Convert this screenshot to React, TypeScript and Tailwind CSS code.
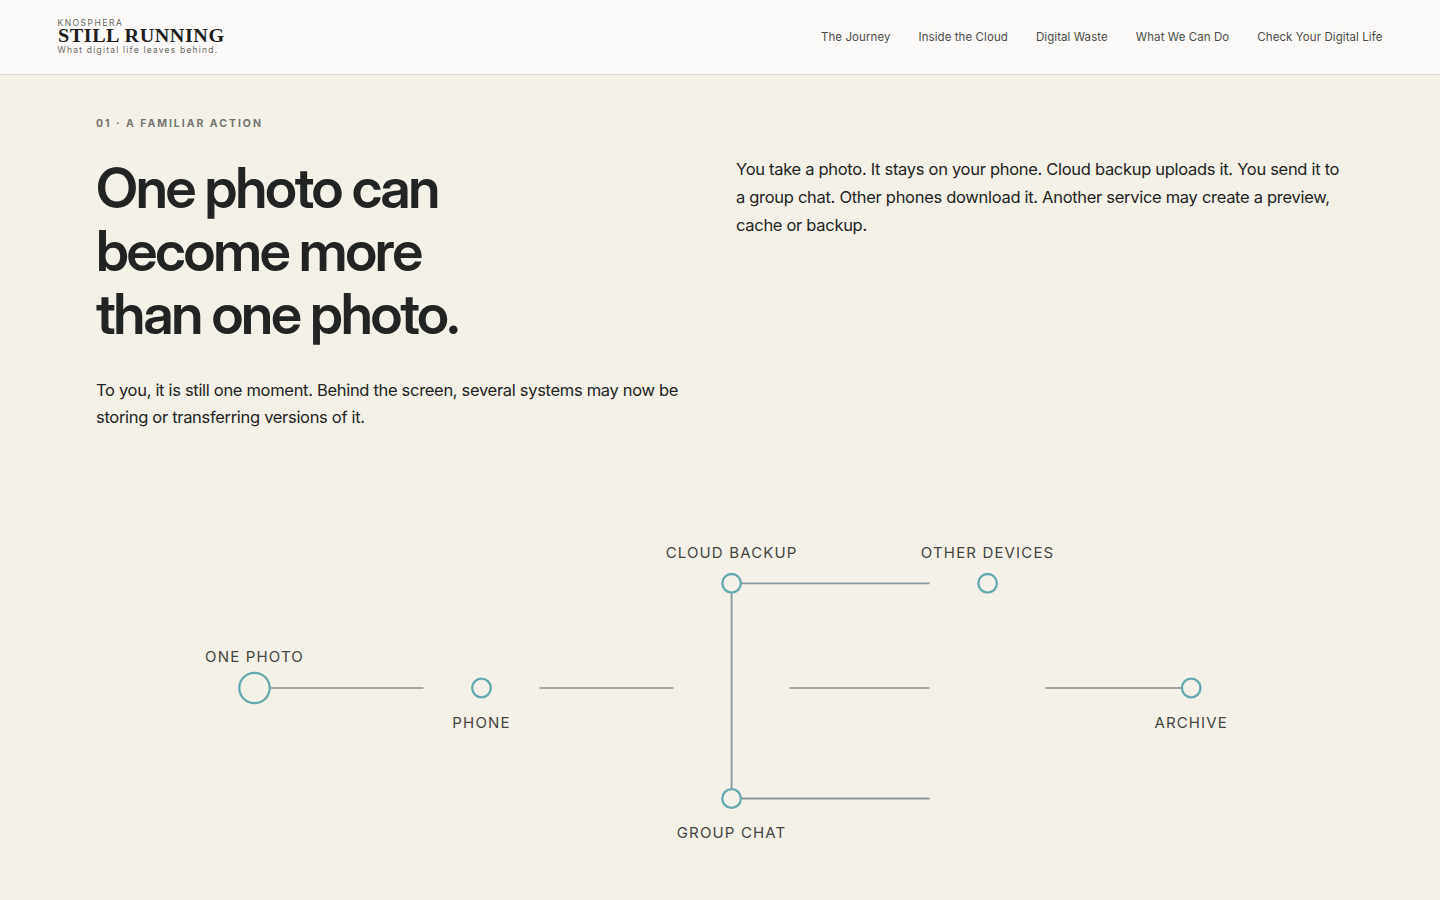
const navItems = [
  'The Journey',
  'Inside the Cloud',
  'Digital Waste',
  'What We Can Do',
  'Check Your Digital Life',
];

type Line = { x1: number; y1: number; x2: number; y2: number; color: string };
type Node = { x: number; y: number; r: number; label: string; labelY: number };

const lines: Line[] = [
  { x1: 270, y1: 688, x2: 423.5, y2: 688, color: '#a5a9a0' },
  { x1: 539.5, y1: 688, x2: 673.5, y2: 688, color: '#a5a9a0' },
  { x1: 789.5, y1: 688, x2: 929.5, y2: 688, color: '#a5a9a0' },
  { x1: 1045.5, y1: 688, x2: 1182, y2: 688, color: '#a5a5a0' },
  { x1: 741, y1: 583.3, x2: 929.5, y2: 583.3, color: '#879799' },
  { x1: 741, y1: 798.5, x2: 929.5, y2: 798.5, color: '#879799' },
  { x1: 731.6, y1: 593, x2: 731.6, y2: 789, color: '#879799' },
];

const nodes: Node[] = [
  { x: 254.5, y: 688, r: 15.2, label: 'ONE PHOTO', labelY: 662 },
  { x: 481.5, y: 688, r: 9.3, label: 'PHONE', labelY: 728 },
  { x: 731.6, y: 583.3, r: 9.3, label: 'CLOUD BACKUP', labelY: 558 },
  { x: 987.6, y: 583.3, r: 9.3, label: 'OTHER DEVICES', labelY: 558 },
  { x: 731.6, y: 798.5, r: 9.3, label: 'GROUP CHAT', labelY: 838 },
  { x: 1191.2, y: 688, r: 9.3, label: 'ARCHIVE', labelY: 728 },
];

function Header() {
  return (
    <header className="flex h-[75px] items-center justify-between border-b border-[#d9dad8] bg-[#fbfaf8] px-[57.5px]">
      <div className="flex flex-col whitespace-nowrap text-[#666763]">
        <span className="text-[8.5px] leading-[9px] tracking-[1.5px]">KNOSPHERA</span>
        <span className="origin-left scale-x-[1.06] font-['Liberation_Serif',serif] text-[19px] leading-[16px] font-bold tracking-[0.52px] text-[#1d1e1c]">
          STILL RUNNING
        </span>
        <span className="text-[8.5px] leading-[12px] tracking-[1.2px]">What digital life leaves behind.</span>
      </div>
      <nav className="flex gap-7 pt-px text-[11.5px] tracking-[0.08px] whitespace-nowrap text-[#4b4c49]">
        {navItems.map((item) => (
          <a key={item} href="#">
            {item}
          </a>
        ))}
      </nav>
    </header>
  );
}

function Diagram() {
  return (
    <svg className="block h-[420px] w-full" viewBox="0 480 1440 420" fill="none">
      {lines.map((l) => (
        <line key={`${l.x1}-${l.y1}-${l.y2}`} x1={l.x1} y1={l.y1} x2={l.x2} y2={l.y2} stroke={l.color} strokeWidth="1.8" />
      ))}
      {nodes.map((n) => (
        <g key={n.label}>
          <circle cx={n.x} cy={n.y} r={n.r} stroke="#65a8af" strokeWidth="2.3" />
          <text x={n.x} y={n.labelY} textAnchor="middle" fill="#444541" className="text-[15px] tracking-[1.15px]">
            {n.label}
          </text>
        </g>
      ))}
    </svg>
  );
}

export default function App() {
  return (
    <div className="h-[900px] w-full overflow-hidden bg-[#f4f1e8] font-['Inter',sans-serif] text-[#222423]">
      <Header />
      <main className="flex h-[825px] flex-col">
        <section className="h-[405px] shrink-0 px-24 pt-[41px]">
          <p className="text-[10.5px] leading-4 font-bold tracking-[1.97px] text-[#747570]">01 · A FAMILIAR ACTION</p>
          <div className="mt-[25px] grid grid-cols-2 gap-8">
            <div>
              <h2 className="font-['Inter_Display','Inter',sans-serif] text-[56px] leading-[63px] font-semibold tracking-[-2.25px] whitespace-nowrap">
                One photo can
                <br />
                become more
                <br />
                than one photo.
              </h2>
              <p className="mt-[31px] text-[16.5px] leading-[27px] tracking-[-0.31px] whitespace-nowrap">
                To you, it is still one moment. Behind the screen, several systems may now be
                <br />
                storing or transferring versions of it.
              </p>
            </div>
            <p className="-mt-0.5 text-[16.5px] leading-7 tracking-[-0.3px] whitespace-nowrap">
              You take a photo. It stays on your phone. Cloud backup uploads it. You send it to
              <br />a group chat. Other phones download it. Another service may create a preview,
              <br />
              cache or backup.
            </p>
          </div>
        </section>
        <Diagram />
      </main>
    </div>
  );
}
